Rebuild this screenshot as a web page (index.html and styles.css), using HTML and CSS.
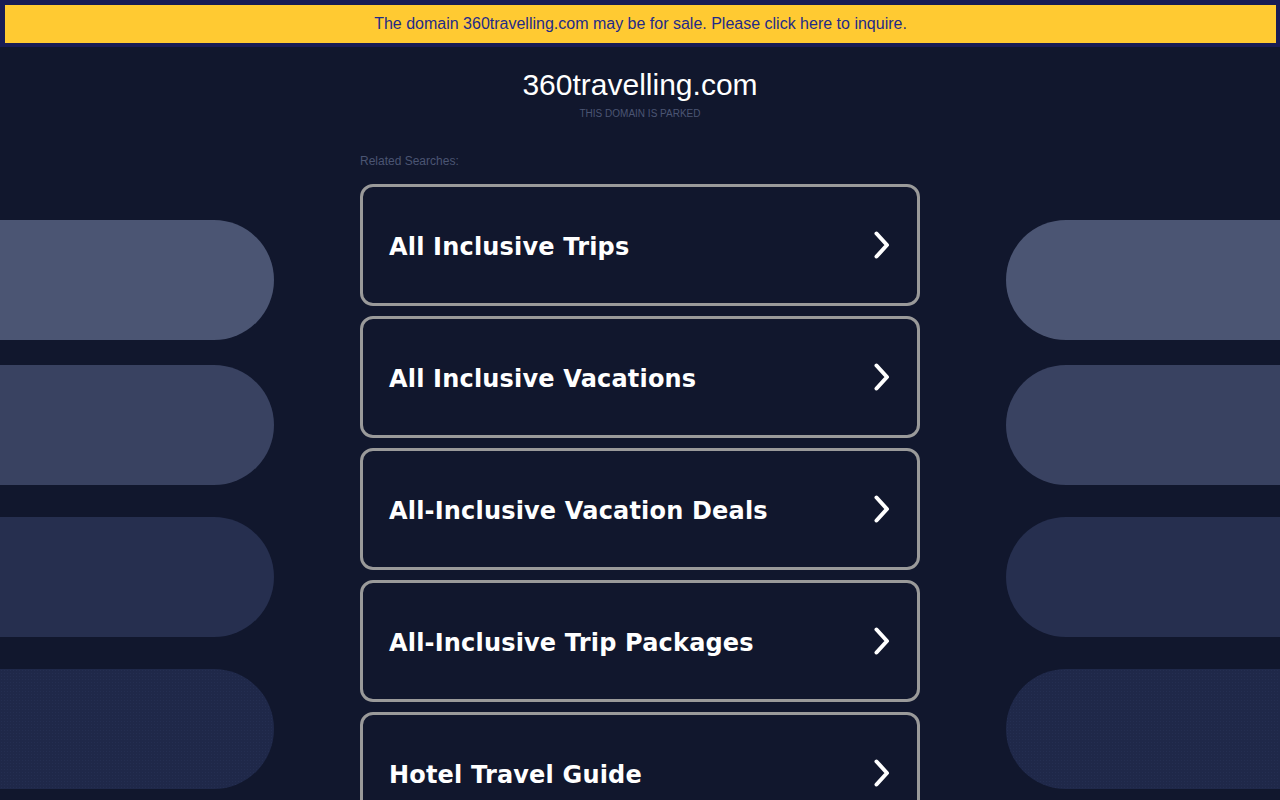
FILE: index.html
```html
<!DOCTYPE html>
<html lang="en">
<head>
<meta charset="utf-8">
<title>360travelling.com</title>
<link rel="stylesheet" href="styles.css">
</head>
<body>
<div class="decor" aria-hidden="true">
  <div class="decor-col decor-left">
    <div class="pill pill-1"></div>
    <div class="pill pill-2"></div>
    <div class="pill pill-3"></div>
    <div class="pill pill-4"></div>
  </div>
  <div class="decor-col decor-right">
    <div class="pill pill-1"></div>
    <div class="pill pill-2"></div>
    <div class="pill pill-3"></div>
    <div class="pill pill-4"></div>
  </div>
</div>
<div class="banner">
  <a class="banner-inner" href="#">The domain 360travelling.com may be for sale. Please click here to inquire.</a>
</div>
<main class="content">
  <h1 class="domain">360travelling.com</h1>
  <p class="parked">THIS DOMAIN IS PARKED</p>
  <section class="related">
    <p class="related-title">Related Searches:</p>
    <a class="search" href="#"><span>All Inclusive Trips</span><svg class="chev" width="16" height="28" viewBox="0 0 16 28"><polyline points="2.5,2.5 13,14 2.5,25.5"/></svg></a>
    <a class="search" href="#"><span>All Inclusive Vacations</span><svg class="chev" width="16" height="28" viewBox="0 0 16 28"><polyline points="2.5,2.5 13,14 2.5,25.5"/></svg></a>
    <a class="search" href="#"><span>All-Inclusive Vacation Deals</span><svg class="chev" width="16" height="28" viewBox="0 0 16 28"><polyline points="2.5,2.5 13,14 2.5,25.5"/></svg></a>
    <a class="search" href="#"><span>All-Inclusive Trip Packages</span><svg class="chev" width="16" height="28" viewBox="0 0 16 28"><polyline points="2.5,2.5 13,14 2.5,25.5"/></svg></a>
    <a class="search" href="#"><span>Hotel Travel Guide</span><svg class="chev" width="16" height="28" viewBox="0 0 16 28"><polyline points="2.5,2.5 13,14 2.5,25.5"/></svg></a>
  </section>
</main>
</body>
</html>
```

FILE: styles.css
```css
html, body {
  margin: 0;
  padding: 0;
}
body {
  background: #11172d;
  font-family: Arial, "Liberation Sans", sans-serif;
  overflow-x: hidden;
  position: relative;
  min-height: 100vh;
}
.decor {
  position: absolute;
  top: 0;
  left: 0;
  right: 0;
  display: flex;
  justify-content: space-between;
  padding-top: 220px;
  z-index: 0;
}
.decor-col {
  display: flex;
  flex-direction: column;
  width: 274px;
}
.pill {
  height: 120px;
}
.pill-2 { margin-top: 25px; }
.pill-3, .pill-4 { margin-top: 32px; }
.decor-left .pill { border-radius: 0 60px 60px 0; }
.decor-right .pill { border-radius: 60px 0 0 60px; }
.pill-1 { background: #4b5573; }
.pill-2 { background: #394261; }
.pill-3 { background: #262f4f; }
.pill-4 {
  background-color: #1f2849;
  background-image: radial-gradient(rgba(60, 75, 120, 0.18) 0.6px, transparent 0.8px);
  background-size: 3px 3px;
}
.banner {
  position: relative;
  z-index: 1;
  background: #181c55;
  padding: 5px 4px 4px 5px;
}
.banner-inner {
  display: block;
  background: #ffca32;
  height: 38px;
  line-height: 38px;
  text-align: center;
  font-size: 16px;
  color: #1f2b88;
  text-decoration: none;
}
.content {
  position: relative;
  z-index: 1;
  width: 560px;
  margin: 0 auto;
  display: flex;
  flex-direction: column;
}
.domain {
  margin: 21px 0 0;
  text-align: center;
  font-weight: normal;
  font-size: 30px;
  line-height: 34px;
  color: #ffffff;
}
.parked {
  margin: 6px 0 0;
  text-align: center;
  font-size: 10px;
  line-height: 12px;
  color: #4b5573;
}
.related {
  display: flex;
  flex-direction: column;
  margin-top: 34px;
}
.related-title {
  margin: 0 0 16px;
  font-size: 12px;
  line-height: 14px;
  color: #4b5573;
}
.search {
  box-sizing: border-box;
  height: 122px;
  margin-bottom: 10px;
  border: 3px solid #9a9a9a;
  border-radius: 13px;
  display: flex;
  align-items: center;
  justify-content: space-between;
  padding: 0 27px 0 26px;
  text-decoration: none;
  color: #ffffff;
  font-family: Verdana, "DejaVu Sans", sans-serif;
  font-weight: bold;
  font-size: 24px;
}
.search span {
  padding-top: 4px;
  letter-spacing: 0.18px;
}
.chev {
  flex: none;
}
.chev polyline {
  fill: none;
  stroke: #ffffff;
  stroke-width: 4;
  stroke-linecap: round;
  stroke-linejoin: round;
}
```
